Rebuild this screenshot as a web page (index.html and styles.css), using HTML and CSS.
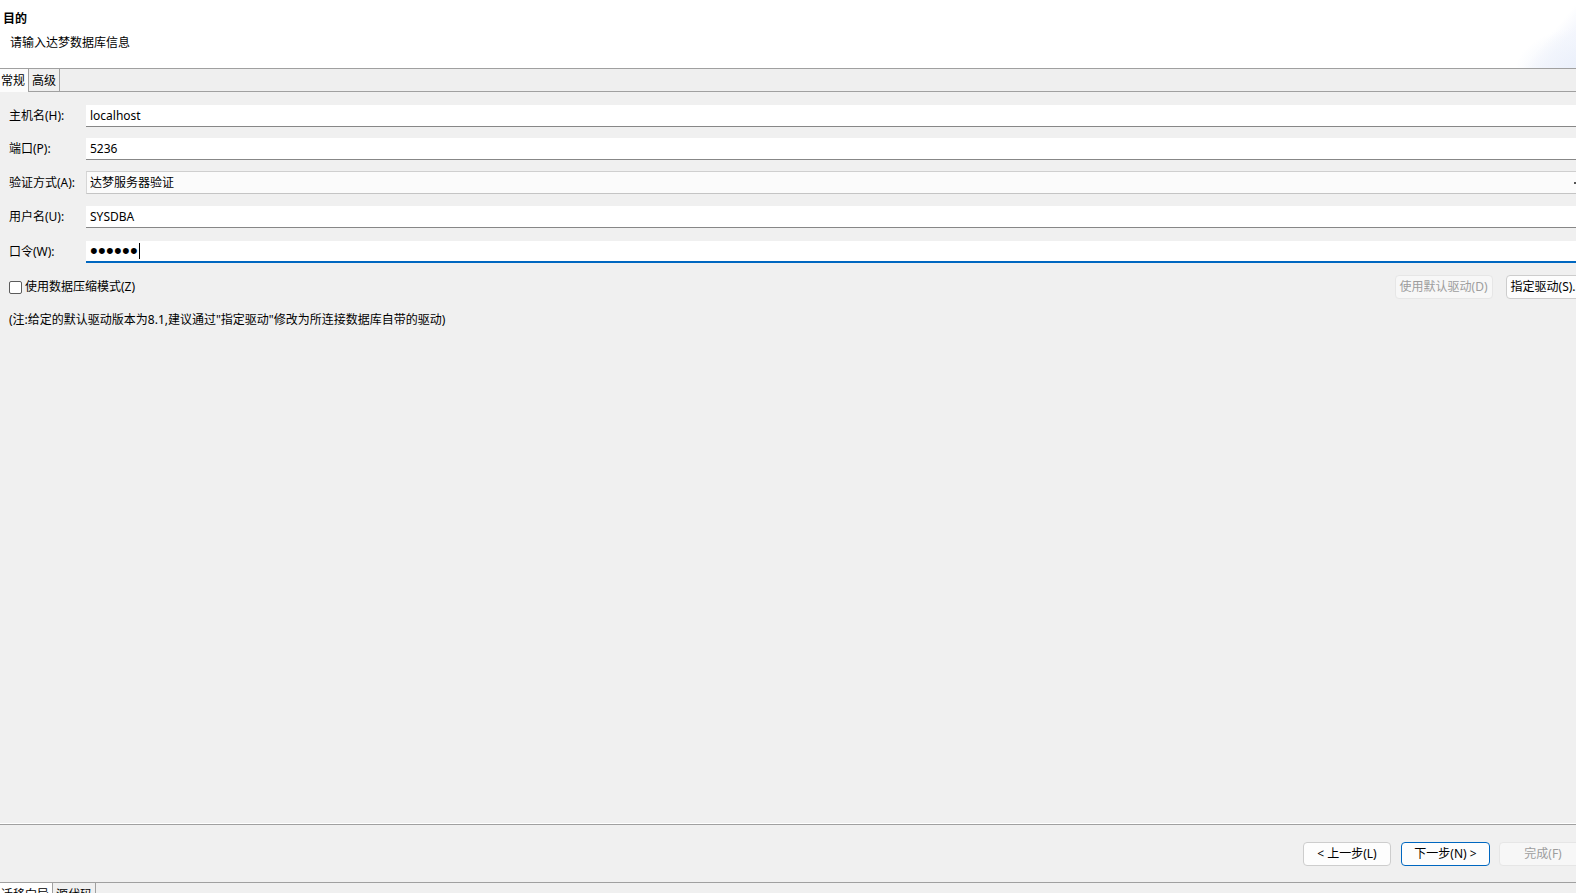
FILE: index.html
```html
<!DOCTYPE html>
<html lang="zh-CN">
<head>
<meta charset="utf-8">
<title>目的</title>
<link rel="stylesheet" href="styles.css">
</head>
<body>
<div class="page">
  <div class="header">
    <div class="title">目的</div>
    <div class="subtitle">请输入达梦数据库信息</div>
    <div class="banner"></div>
  </div>
  <div class="tabbar">
    <div class="tab active">常规</div>
    <div class="tab">高级</div>
    <div class="tab-rest"></div>
  </div>
  <div class="content">
    <div class="form">
      <div class="row r1">
        <div class="label">主机名(H):</div>
        <div class="input">localhost</div>
      </div>
      <div class="row r2">
        <div class="label">端口(P):</div>
        <div class="input">5236</div>
      </div>
      <div class="row r3">
        <div class="label">验证方式(A):</div>
        <div class="combo"><span>达梦服务器验证</span><span class="arrow"></span></div>
      </div>
      <div class="row r4">
        <div class="label">用户名(U):</div>
        <div class="input">SYSDBA</div>
      </div>
      <div class="row r5">
        <div class="label">口令(W):</div>
        <div class="input focus"><span class="dots">••••••</span><span class="caret"></span></div>
      </div>
    </div>
    <div class="options">
      <label class="check"><span class="box"></span>使用数据压缩模式(Z)</label>
      <div class="btns">
        <div class="btn disabled">使用默认驱动(D)</div>
        <div class="btn">指定驱动(S)...</div>
      </div>
    </div>
    <div class="note">(注:给定的默认驱动版本为8.1,建议通过"指定驱动"修改为所连接数据库自带的驱动)</div>
  </div>
  <div class="footer">
    <div class="btn wide">&lt; 上一步(L)</div>
    <div class="btn wide primary">下一步(N) &gt;</div>
    <div class="btn wide disabled">完成(F)</div>
  </div>
  <div class="bottomtabs">
    <div class="btab active">迁移向导</div>
    <div class="btab">源代码</div>
  </div>
</div>
</body>
</html>
```
FILE: styles.css
```css
html, body {
  margin: 0;
  padding: 0;
}
body {
  width: 1576px;
  height: 893px;
  overflow: hidden;
  background: #f0f0f0;
  font-family: "Noto Sans", "Noto Sans CJK SC", sans-serif;
  font-size: 12px;
  color: #000;
}
.page {
  display: flex;
  flex-direction: column;
  height: 893px;
  width: 1576px;
}
.header {
  position: relative;
  height: 68px;
  background: #fff;
  border-bottom: 1px solid #a0a0a0;
  overflow: hidden;
}
.title {
  padding: 10px 0 0 3px;
  line-height: 17px;
  font-weight: bold;
  font-size: 12px;
}
.subtitle {
  margin-top: 8px;
  padding-left: 10px;
  line-height: 16px;
}
.banner {
  position: absolute;
  right: -10px;
  top: 0;
  width: 70px;
  height: 68px;
  background:
    radial-gradient(ellipse 90px 60px at 100% 110%, rgba(232,238,250,0.9) 0%, rgba(240,244,252,0.6) 55%, rgba(255,255,255,0) 80%),
    linear-gradient(130deg, #ffffff 50%, #f5f7fd 66%, #edf1fb 100%);
}
.tabbar {
  display: flex;
  height: 22px;
  border-bottom: 1px solid #a0a0a0;
  background: #efefef;
}
.tab {
  line-height: 20px;
  padding: 2px 3px 0;
  border-right: 1px solid #a0a0a0;
}
.tab.active {
  padding: 2px 3px 0 1px;
  background: #fcfcfc;
  height: 21px;
  position: relative;
  z-index: 1;
}
.content {
  flex: 1;
  margin-right: -24px;
  background: #f0f0f0;
  border-bottom: 1px solid #fff;
}
.form {
  padding-top: 13px;
  display: flex;
  flex-direction: column;
}
.row {
  display: flex;
  align-items: center;
}
.r2, .r3 { margin-top: 11px; }
.r4 { margin-top: 12px; }
.r5 { margin-top: 13px; }
.label {
  width: 77px;
  padding-left: 9px;
  flex: none;
  line-height: 16px;
}
.input {
  flex: 1;
  height: 21px;
  line-height: 21px;
  background: #fff;
  border-bottom: 1px solid #878787;
  padding-left: 4px;
  display: flex;
  align-items: center;
}
.input.focus {
  height: 20px;
  border-bottom: 2px solid #0067c0;
}
.dots {
  font-family: "Liberation Sans", sans-serif;
  font-size: 22px;
  line-height: 20px;
  height: 20px;
  letter-spacing: 0.3px;
}
.caret {
  width: 1px;
  height: 16px;
  background: #000;
  margin-left: 1px;
}
.combo {
  flex: 1;
  height: 21px;
  line-height: 21px;
  background: #fbfbfb;
  border-top: 1px solid #cfcfcf;
  border-bottom: 1px solid #c4c4c4;
  border-left: 1px solid #d6d6d6;
  padding-left: 3px;
  display: flex;
  align-items: center;
  justify-content: space-between;
  padding-right: 23px;
}
.arrow {
  width: 3px;
  height: 2px;
  background: #555;
}
.options {
  margin-top: 12px;
  display: flex;
  align-items: center;
  justify-content: space-between;
  padding-left: 9px;
  padding-right: 13px;
}
.check {
  display: flex;
  align-items: center;
  line-height: 16px;
}
.box {
  width: 11px;
  height: 11px;
  border: 1px solid #5c5c5c;
  border-radius: 2px;
  background: #fff;
  margin-right: 3px;
}
.btns {
  display: flex;
  gap: 13px;
}
.btn {
  height: 22px;
  line-height: 22px;
  padding: 0 4px;
  border: 1px solid #cdcdcd;
  border-radius: 4px;
  background: #fdfdfd;
  text-align: center;
  white-space: nowrap;
}
.btn.disabled {
  background: #f7f7f7;
  border-color: #e6e6e6;
  color: #9d9d9d;
}
.note {
  margin-top: 13px;
  padding-left: 9px;
  line-height: 16px;
}
.footer {
  height: 58px;
  border-top: 1px solid #a0a0a0;
  display: flex;
  justify-content: flex-end;
  align-items: flex-start;
  padding-top: 17px;
  padding-right: 13px;
  margin-right: -24px;
  box-sizing: border-box;
  gap: 9px;
}
.btn.wide {
  width: 86px;
  padding: 0;
}
.btn.primary {
  border-color: #0067c0;
  width: 87px;
  margin-left: 1px;
}
.bottomtabs {
  height: 10px;
  border-top: 1px solid #a0a0a0;
  display: flex;
  overflow: visible;
}
.btab {
  padding: 4px 3px 0;
  line-height: 16px;
  height: 16px;
  border-right: 1px solid #a0a0a0;
  font-size: 12px;
}
.btab.active {
  background: #fff;
  padding-left: 1px;
}
```
